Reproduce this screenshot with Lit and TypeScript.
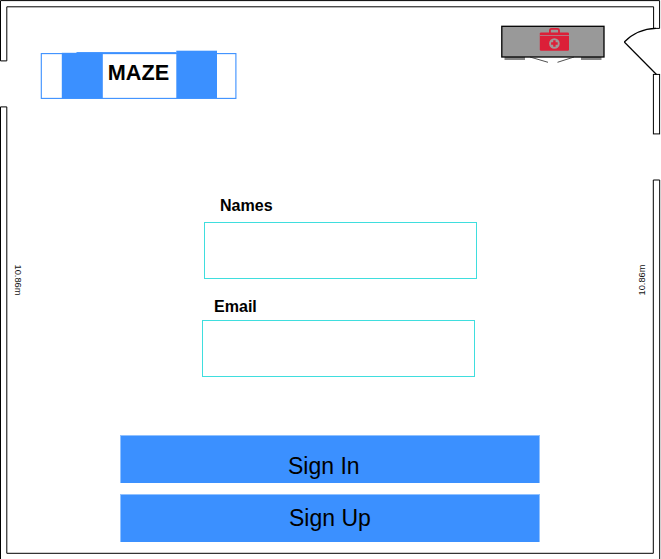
import { LitElement, html, css, svg } from "lit";
import { customElement, property } from "lit/decorators.js";

@customElement("floor-plan")
class FloorPlan extends LitElement {
  static styles = css`
    :host { display: block; }
    svg { display: block; }
    .wall { fill: #fff; stroke: #000; stroke-width: 1; }
    .line { fill: none; stroke: #000; stroke-width: 1.2; }
    .thin { fill: none; stroke: #222; stroke-width: 0.8; }
    .cabinet { fill: #999; stroke: #000; stroke-width: 1.3; }
    .foot { fill: #858585; }
    .kit { fill: #dc1f38; }
    .handle { fill: none; stroke: #dc1f38; stroke-width: 1.8; }
    .seam { fill: none; stroke: #b0808a; stroke-width: 0.9; }
    .disc { fill: #a29898; }
    .size { font: 9.3px "Liberation Sans", Arial, sans-serif; fill: #111; text-anchor: middle; }
  `;

  render() {
    return html`<svg width="661" height="559" viewBox="0 0 661 559">
      ${svg`
        <path class="wall" d="M0.5 60.9V0.6H659.6V28.4H653.6V6.8H6.8V60.9Z" />
        <path class="wall" d="M0.5 565V106.9H6.8V553.3H653.3V180H659.7V565" />
        <rect class="wall" x="653.4" y="74.4" width="6.2" height="59.5" />
        <path class="line" d="M656.5 74.5L624.3 42" />
        <path class="line" d="M624.3 42Q637 29 656 28.4" />
        <rect class="foot" x="504.5" y="57" width="20.5" height="3" />
        <rect class="foot" x="581" y="57" width="20.5" height="3" />
        <rect class="cabinet" x="501.8" y="26.3" width="102.2" height="30.7" />
        <path class="thin" d="M530 57L548 62.3M574 57L557.5 62.3" />
        <path class="handle" d="M549.9 33V30.5Q549.9 28.9 551.5 28.9H557.4Q559 28.9 559 30.5V33" />
        <rect class="kit" x="539.8" y="32.4" width="29.2" height="18.4" rx="1.2" />
        <path class="seam" d="M539.8 35.5H569" />
        <circle class="disc" cx="554.4" cy="43.5" r="5.3" />
        <path class="kit" d="M553.2 40.2h2.4v2.1h2.1v2.4h-2.1v2.1h-2.4v-2.1h-2.1v-2.4h2.1z" />
        <text class="size" transform="translate(14.8 280) rotate(90)">10.86m</text>
        <text class="size" transform="translate(645 280) rotate(-90)">10.86m</text>
      `}
    </svg>`;
  }
}

@customElement("maze-logo")
class MazeLogo extends LitElement {
  static styles = css`
    :host { display: block; width: 197px; height: 49px; }
    svg { display: block; }
    .frame { fill: #fff; stroke: #3b90ff; stroke-width: 1.1; }
    .block { fill: #3b90ff; }
    .name { font: bold 21.3px "Liberation Sans", Arial, sans-serif; fill: #000; }
  `;

  render() {
    return html`<svg width="197" height="49" viewBox="40 50 197 49">
      ${svg`
        <rect class="frame" x="41.3" y="53.6" width="194.6" height="44.8" />
        <rect class="block" x="76.5" y="52.1" width="100" height="1.8" />
        <rect class="block" x="61.8" y="52.8" width="41" height="45.4" />
        <rect class="block" x="176.3" y="50.7" width="40.7" height="47.3" />
        <text class="name" x="107.8" y="80.3" textLength="61.4" lengthAdjust="spacingAndGlyphs">MAZE</text>
      `}
    </svg>`;
  }
}

@customElement("form-field")
class FormField extends LitElement {
  @property() label = "";

  static styles = css`
    :host { display: block; width: 273px; }
    .label {
      display: block;
      height: 18px;
      margin-left: var(--label-inset, 0);
      margin-bottom: var(--label-gap, 0);
      font: bold 16px/18px "Liberation Sans", Arial, sans-serif;
      color: #000;
      transform: scale(1.003, 0.98);
      transform-origin: 0 80%;
    }
    .box { height: 57px; box-sizing: border-box; border: 1px solid #3fdede; }
  `;

  render() {
    return html`<span class="label">${this.label}</span><div class="box"></div>`;
  }
}

@customElement("app-root")
class AppRoot extends LitElement {
  static styles = css`
    :host {
      display: block;
      position: relative;
      width: 661px;
      height: 559px;
      overflow: hidden;
      background: #fff;
    }
    .plan { position: absolute; inset: 0; }
    .content { position: relative; display: flex; flex-direction: column; padding-top: 50px; }
    .logo { margin-left: 40px; }
    .names { margin: 98px 0 0 204px; --label-inset: 15.8px; --label-gap: 7px; }
    .email { margin: 19px 0 0 202px; --label-inset: 11.8px; --label-gap: 4px; }
    .actions { display: flex; flex-direction: column; gap: 11px; margin: 58px 0 0 120px; width: 420px; }
    .button {
      display: block;
      box-sizing: border-box;
      height: 48px;
      border: 1px solid #90c1ff;
      border-bottom: 0;
      background: #3b90ff;
      color: #000;
      font: 23px/26px "Liberation Sans", Arial, sans-serif;
    }
    .in { padding: 17px 0 0 167px; }
    .up { padding: 10px 0 0 168px; }
  `;

  render() {
    return html`
      <floor-plan class="plan"></floor-plan>
      <div class="content">
        <maze-logo class="logo"></maze-logo>
        <form-field class="names" label="Names"></form-field>
        <form-field class="email" label="Email"></form-field>
        <div class="actions">
          <div class="button in" role="button">Sign In</div>
          <div class="button up" role="button">Sign Up</div>
        </div>
      </div>
    `;
  }
}
